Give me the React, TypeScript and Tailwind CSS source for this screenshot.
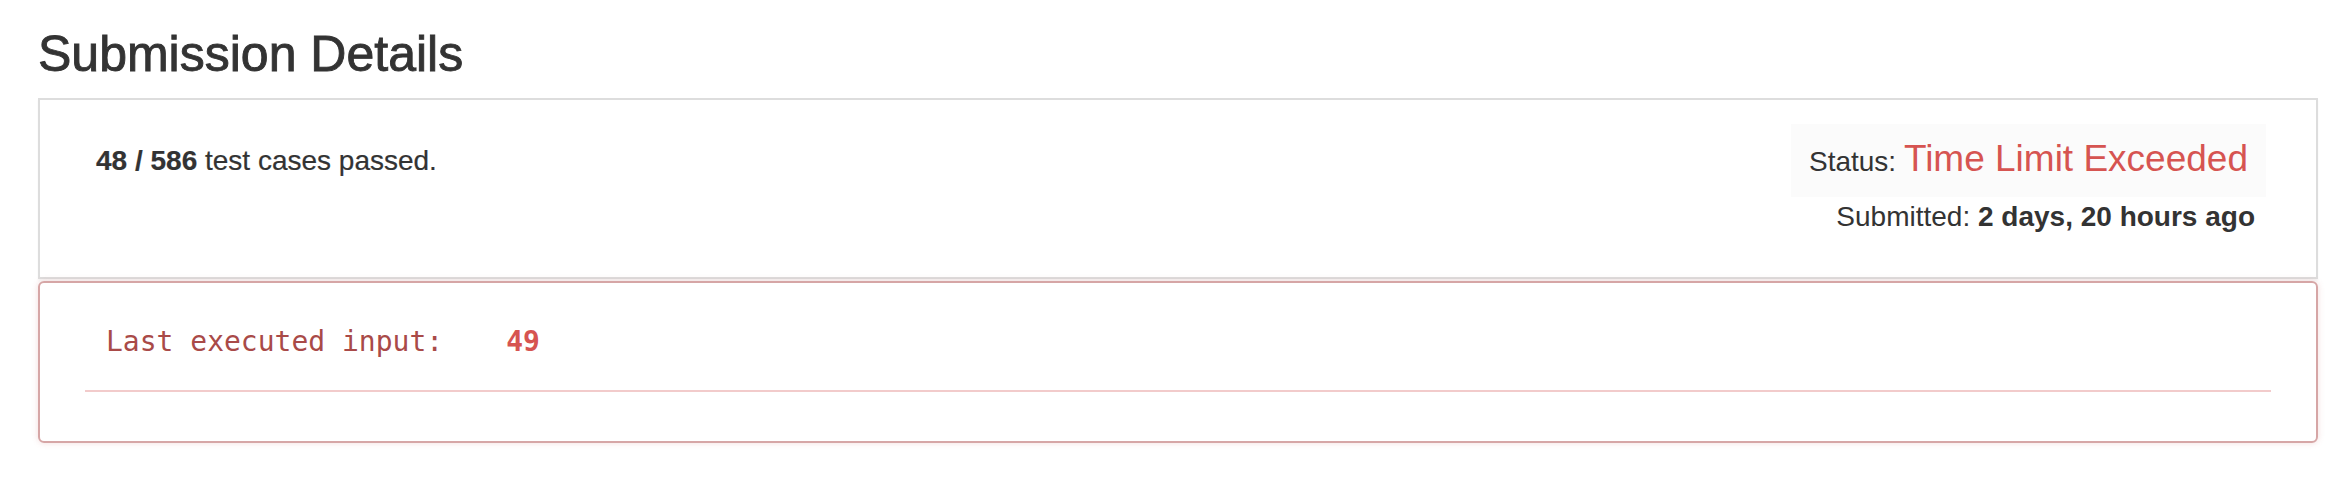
import React from 'react';

const sans = "font-['Liberation_Sans',Arial,sans-serif]";
const mono = "font-['DejaVu_Sans_Mono','Liberation_Mono',monospace]";

interface Submission {
  passed: number;
  total: number;
  status: string;
  submitted: string;
  lastInput: string;
}

const submission: Submission = {
  passed: 48,
  total: 586,
  status: 'Time Limit Exceeded',
  submitted: '2 days, 20 hours ago',
  lastInput: '49',
};

const App = () => {
  return (
    <div className={`min-h-screen bg-white text-[#333] pl-[38px] pr-[22px] ${sans}`}>
      <h3 className="pt-[26px] text-[50px] leading-[56px] font-medium [-webkit-text-stroke:0.9px_#333]">
        Submission Details
      </h3>

      {/* 结果概要 */}
      <div className="mt-[16px] h-[181px] border-2 border-[#dddddd] shadow-[0_2px_2px_rgba(0,0,0,0.04)] flex justify-between pl-[56px] pr-[50px] pt-[24px]">
        <p className="mt-[17px] text-[28px] leading-[40px] [-webkit-text-stroke:0.2px_#333]">
          <strong className="font-bold">
            {submission.passed} / {submission.total}
          </strong>{' '}
          test cases passed.
        </p>
        <div className="flex flex-col items-end">
          <div className="h-[73px] bg-[#fbfbfb] px-[18px] pt-[16px] text-[28px] leading-none whitespace-nowrap">
            Status: <span className="text-[37px] text-[#d65451]">{submission.status}</span>
          </div>
          <div className="pr-[11px] text-[28px] leading-[40px] whitespace-nowrap">
            Submitted: <strong className="font-bold">{submission.submitted}</strong>
          </div>
        </div>
      </div>

      {/* 最后执行的输入 */}
      <div className="mt-[2px] h-[162px] rounded-[6px] border-2 border-[#d6a6a6] shadow-[0_0_6px_rgba(200,100,100,0.22)] px-[45px] pt-[39px]">
        <div className={`pl-[21px] text-[28px] leading-[40px] whitespace-pre ${mono}`}>
          <span className="text-[#a94a48]">Last executed input:</span>
          <span className="ml-[63px] font-bold text-[#d65451]">{submission.lastInput}</span>
        </div>
        <div className="mt-[28px] h-[2px] bg-[#f2cbcb]"></div>
      </div>
    </div>
  );
};

export default App;
